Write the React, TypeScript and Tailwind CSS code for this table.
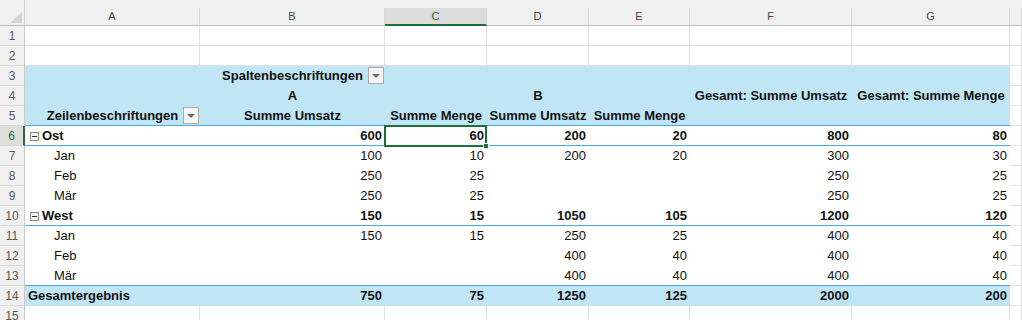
import type { ReactNode } from "react";

const GRID =
  "grid grid-cols-[25px_175px_185px_102px_102px_101px_162px_158px_1fr]";

const LETTERS = ["A", "B", "C", "D", "E", "F", "G", ""];

function ColumnHeader() {
  return (
    <div className={`${GRID} h-[26px] bg-[#f0f0f0]`}>
      <div className="relative border-b border-r border-b-[#bdbdbd] border-r-[#d0d0d0]">
        <span className="absolute bottom-[2px] right-[2px] h-0 w-0 border-b-[11px] border-l-[12px] border-b-[#d4d4d4] border-l-transparent" />
      </div>
      {LETTERS.map((c, i) =>
        c === "C" ? (
          <div
            key={i}
            className="flex h-[18px] items-center justify-center self-end border-b-2 border-r border-b-[#1e6e3c] border-r-[#d4d4d4] bg-[#dcdcdc] text-[11px] text-[#1e6e3c]"
          >
            {c}
          </div>
        ) : (
          <div
            key={i}
            className="flex h-[18px] items-center justify-center self-end border-b border-r border-b-[#bdbdbd] border-r-[#dadada] text-[11px] text-[#444]"
          >
            {c}
          </div>
        ),
      )}
    </div>
  );
}

function RowNum({ n, active }: { n: number; active?: boolean }) {
  if (active) {
    return (
      <div className="flex items-center justify-center border-b border-r-2 border-b-[#d6d6d6] border-r-[#1e6e3c] bg-[#dedede] text-[12px] text-[#1e6e3c]">
        {n}
      </div>
    );
  }
  return (
    <div className="flex items-center justify-center border-b border-r border-b-[#d8d8d8] border-r-[#c8c8c8] bg-[#f0f0f0] text-[12px] text-[#5a5a5a]">
      {n}
    </div>
  );
}

function Plain() {
  return <div className="border-b border-r border-[#e1e1e1] bg-white" />;
}

function PlainRow({ n }: { n: number }) {
  return (
    <div className={`${GRID} h-[20px]`}>
      <RowNum n={n} />
      {LETTERS.map((_, i) => (
        <Plain key={i} />
      ))}
    </div>
  );
}

type PvProps = {
  align?: "l" | "r" | "c";
  bold?: boolean;
  children?: ReactNode;
  className?: string;
  fill?: boolean;
  line?: boolean;
};

function Pv({ align = "r", bold, children, className = "", fill, line }: PvProps) {
  const justify =
    align === "r"
      ? "justify-end pr-[3px]"
      : align === "c"
        ? "justify-center"
        : "justify-start";
  return (
    <div
      className={`relative flex items-end whitespace-nowrap border-b pb-[1px] text-[13px] leading-[16px] text-[#111] ${
        line ? "border-b-[#47a9df]" : "border-b-transparent"
      } ${fill ? "bg-[#c0e6f5]" : "bg-white"} ${bold ? "font-bold" : ""} ${justify} ${className}`}
    >
      {children}
    </div>
  );
}

function DropButton() {
  return (
    <span className="absolute bottom-[1px] right-[1px] flex h-[17px] w-[16px] items-center justify-center border border-[#ababab] bg-[#f7f7f7]">
      <span className="h-0 w-0 border-x-[4px] border-t-[4px] border-x-transparent border-t-[#6a6a6a]" />
    </span>
  );
}

function Collapse() {
  return (
    <span className="mr-[3px] flex h-[9px] w-[9px] items-center justify-center border border-[#8c8c8c] bg-[#f2f2f2]">
      <span className="h-px w-[5px] bg-[#333]" />
    </span>
  );
}

function Selection() {
  return (
    <>
      <span className="absolute -left-[1px] -top-[1px] bottom-[-2px] right-0 z-10 border-2 border-[#1e6e3c]" />
      <span className="absolute bottom-[-4px] right-[-2px] z-20 h-[6px] w-[6px] border border-white bg-[#1e6e3c]" />
    </>
  );
}

type DataRowProps = {
  active?: boolean;
  kind: "group" | "item" | "total";
  label: string;
  line?: boolean;
  n: number;
  vals: string[];
};

function DataRow({ active, kind, label, line, n, vals }: DataRowProps) {
  const bold = kind !== "item";
  const fill = kind === "total";
  const pad =
    kind === "item" ? "pl-[29px]" : kind === "group" ? "pl-[5px]" : "pl-[3px]";
  return (
    <div className={`${GRID} h-[20px]`}>
      <RowNum n={n} active={active} />
      <Pv align="l" bold={bold} fill={fill} line={line} className={pad}>
        {kind === "group" ? (
          <span className="flex items-center">
            <Collapse />
            {label}
          </span>
        ) : (
          label
        )}
      </Pv>
      {vals.map((v, i) => (
        <Pv key={i} bold={bold} fill={fill} line={line}>
          {v}
          {active && i === 1 ? <Selection /> : null}
        </Pv>
      ))}
      <Plain />
    </div>
  );
}

export default function App() {
  return (
    <div className="h-[320px] w-[1022px] overflow-hidden bg-white font-['Liberation_Sans',Arial,sans-serif]">
      <ColumnHeader />
      <PlainRow n={1} />
      <PlainRow n={2} />

      <div className={`${GRID} h-[20px]`}>
        <RowNum n={3} />
        <Pv fill />
        <Pv fill bold align="c">
          Spaltenbeschriftungen
          <DropButton />
        </Pv>
        <Pv fill />
        <Pv fill />
        <Pv fill />
        <Pv fill />
        <Pv fill />
        <Plain />
      </div>

      <div className={`${GRID} h-[20px]`}>
        <RowNum n={4} />
        <Pv fill />
        <Pv fill bold align="c">
          A
        </Pv>
        <Pv fill />
        <Pv fill bold align="c">
          B
        </Pv>
        <Pv fill />
        <Pv fill bold align="c">
          Gesamt: Summe Umsatz
        </Pv>
        <Pv fill bold align="c">
          Gesamt: Summe Menge
        </Pv>
        <Plain />
      </div>

      <div className={`${GRID} h-[20px]`}>
        <RowNum n={5} />
        <Pv fill line bold align="c">
          Zeilenbeschriftungen
          <DropButton />
        </Pv>
        <Pv fill line bold align="c">
          Summe Umsatz
        </Pv>
        <Pv fill line bold align="c">
          Summe Menge
        </Pv>
        <Pv fill line bold align="c">
          Summe Umsatz
        </Pv>
        <Pv fill line bold align="c">
          Summe Menge
        </Pv>
        <Pv fill line />
        <Pv fill line />
        <Plain />
      </div>

      <DataRow n={6} kind="group" label="Ost" line active vals={["600", "60", "200", "20", "800", "80"]} />
      <DataRow n={7} kind="item" label="Jan" vals={["100", "10", "200", "20", "300", "30"]} />
      <DataRow n={8} kind="item" label="Feb" vals={["250", "25", "", "", "250", "25"]} />
      <DataRow n={9} kind="item" label="Mär" vals={["250", "25", "", "", "250", "25"]} />
      <DataRow n={10} kind="group" label="West" line vals={["150", "15", "1050", "105", "1200", "120"]} />
      <DataRow n={11} kind="item" label="Jan" vals={["150", "15", "250", "25", "400", "40"]} />
      <DataRow n={12} kind="item" label="Feb" vals={["", "", "400", "40", "400", "40"]} />
      <DataRow n={13} kind="item" label="Mär" line vals={["", "", "400", "40", "400", "40"]} />
      <DataRow n={14} kind="total" label="Gesamtergebnis" vals={["750", "75", "1250", "125", "2000", "200"]} />
      <PlainRow n={15} />
    </div>
  );
}
